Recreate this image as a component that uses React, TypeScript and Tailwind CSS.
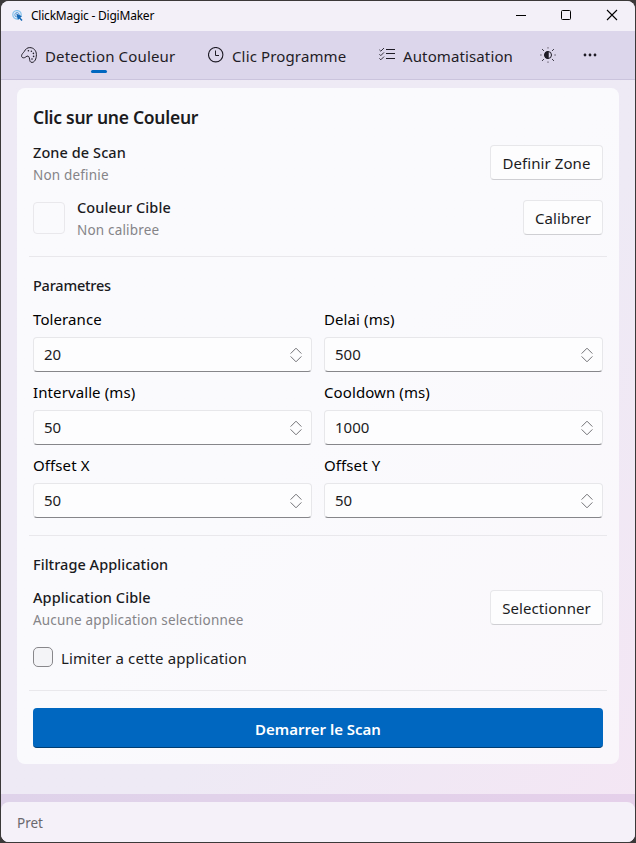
import { clsx } from "clsx"

function AppLogo() {
    return (
        <svg width="12" height="12" viewBox="0 0 12 12" fill="none">
            <circle cx="5" cy="4.8" r="4.2" stroke="#8cc4ec" strokeWidth="1.3" />
            <circle cx="5" cy="4.8" r="2.2" stroke="#4d9bdc" strokeWidth="1" />
            <path d="M4.2 3.6L10 6.2L8.2 7.4L10.6 10L9.4 11L7.2 8.6L6 10Z" fill="#1668b5" />
        </svg>
    )
}

function PaletteIcon() {
    return (
        <svg width="16" height="16" viewBox="0 0 16 16" fill="none" stroke="#1f1c26">
            <path d="M.6 8.6C.8 7 2 6.2 3.2 4.6C4.6 2 6.2 .6 8.8 .6C12.6 .6 15.4 3.6 15.4 7.6C15.4 12 13.6 15.4 11 15.4C9 15.4 8.8 13.8 8.6 12.2C8.4 10 7.4 8.6 6 9.2C4.6 9.8 4.2 10.8 2.6 10.8C1.2 10.8 .4 10 .6 8.6Z" />
            <g fill="#1f1c26" stroke="none">
                <circle cx="7.4" cy="3.8" r=".8" />
                <circle cx="10.4" cy="4.2" r=".8" />
                <circle cx="12.4" cy="6.4" r=".8" />
                <circle cx="12.6" cy="9.4" r=".8" />
                <circle cx="11" cy="12" r=".8" />
            </g>
        </svg>
    )
}

function ClockIcon() {
    return (
        <svg width="16" height="16" viewBox="0 0 16 16" fill="none" stroke="#1f1c26">
            <circle cx="7.7" cy="7.7" r="7.2" strokeWidth="1.1" />
            <path d="M7.5 3.5V8.5H11" />
        </svg>
    )
}

function ChecklistIcon() {
    return (
        <svg width="17" height="14" viewBox="0 0 17 14" fill="none" stroke="#1f1c26">
            <path d="M.4 2.8L1.8 4.2L5 1M.4 7.2L1.8 8.6L5 5.4M.4 11.4L1.8 12.8L5 9.6" strokeWidth=".9" />
            <path d="M7 2.5H16M7 6.5H16M7 11.5H16" />
        </svg>
    )
}

function BrightnessIcon() {
    return (
        <svg width="16" height="16" viewBox="0 0 16 16" fill="none" stroke="#1f1c26">
            <circle cx="8" cy="8" r="3.5" />
            <path d="M8.2 4.5A3.5 3.5 0 0 0 8.2 11.5Z" fill="#1f1c26" />
            <path d="M3.8 3.8L2.2 2.2M12.2 3.8L13.8 2.2M3.8 12.2L2.2 13.8M12.2 12.2L13.8 13.8" />
            <path d="M8 .2V1.6M8 14.4V15.8M.2 8H1.6M14.4 8H15.8" strokeWidth="1.5" opacity=".5" />
        </svg>
    )
}

function TitleBar() {
    return (
        <header className="flex h-[30px] shrink-0 items-center bg-[#f3f0f8] pl-[11px] text-black">
            <AppLogo />
            <span className="ml-[7px] flex-1 text-[12px] tracking-[-0.22px]">ClickMagic - DigiMaker</span>
            <svg width="104" height="12" viewBox="0 0 104 12" fill="none" stroke="#000" className="mr-4 mb-[2px]">
                <path d="M1 6.5H11" />
                <rect x="46.5" y="1.5" width="9" height="9" rx="1" />
                <path d="M92 1L102 11M102 1L92 11" strokeWidth="1.1" />
            </svg>
        </header>
    )
}

function NavBar() {
    return (
        <nav className="flex h-[49px] shrink-0 items-center border-b border-[#cbc4dd] bg-[#dcd6eb] pl-5 text-[#1f1c26]">
            <div className="relative flex w-[187px] items-center">
                <span className="mb-px">
                    <PaletteIcon />
                </span>
                <span className="mt-0.5 ml-2 tracking-[0.16px]">Detection Couleur</span>
                <span className="absolute -bottom-[6px] left-[70px] h-[3px] w-4 rounded-full bg-[#0067c0]" />
            </div>
            <div className="flex w-[171px] items-center">
                <span className="mb-px">
                    <ClockIcon />
                </span>
                <span className="mt-0.5 ml-2 tracking-[0.14px]">Clic Programme</span>
            </div>
            <div className="flex w-[161px] items-center">
                <span className="mb-[2px]">
                    <ChecklistIcon />
                </span>
                <span className="mt-0.5 ml-[7px] tracking-[0.12px]">Automatisation</span>
            </div>
            <span className="mb-px">
                <BrightnessIcon />
            </span>
            <svg width="14" height="4" viewBox="0 0 14 4" fill="#1f1c26" className="mb-px ml-[27px]">
                <circle cx="2" cy="2" r="1.4" />
                <circle cx="7" cy="2" r="1.4" />
                <circle cx="12" cy="2" r="1.4" />
            </svg>
        </nav>
    )
}

function ActionButton({ label, className }: { label: string; className: string }) {
    return (
        <button
            className={clsx(
                "mb-[3px] h-[35px] rounded border border-[#e7e7ea] border-b-[#cfcfd3] bg-[#fdfdfe] pt-px text-center tracking-[0.07px]",
                className
            )}
        >
            {label}
        </button>
    )
}

function Info({ title, status }: { title: string; status: string }) {
    return (
        <div className="flex-1">
            <div className="h-[22px] text-[14.5px] leading-[20px] font-medium tracking-[0.08px]">{title}</div>
            <div className="text-[13.5px] leading-[22px] tracking-[0.18px] text-[#858488]">{status}</div>
        </div>
    )
}

function Divider({ className }: { className: string }) {
    return <hr className={clsx("-mx-1 border-[#e9e8ec]", className)} />
}

function NumberField({ label, value }: { label: string; value: number }) {
    return (
        <div>
            <div className="h-[22px] leading-[20px] tracking-[0.1px] text-black">{label}</div>
            <div className="mt-1.5 flex h-[35px] items-center justify-between rounded border border-[#e7e7ea] border-b-[#86868a] bg-[#fdfdfe] pr-[9px] pl-2.5">
                <span>{value}</span>
                <svg width="12" height="16" viewBox="0 0 12 16" fill="none" stroke="#727276">
                    <path d="M.6 6.6L6 1.2L11.4 6.6M.6 9.4L6 14.8L11.4 9.4" />
                </svg>
            </div>
        </div>
    )
}

const fields = [
    { label: "Tolerance", value: 20 },
    { label: "Delai (ms)", value: 500 },
    { label: "Intervalle (ms)", value: 50 },
    { label: "Cooldown (ms)", value: 1000 },
    { label: "Offset X", value: 50 },
    { label: "Offset Y", value: 50 },
]

export default function App() {
    return (
        <div className="h-[843px] w-[636px] bg-[#3b3939] p-px font-['Noto_Sans','Open_Sans',sans-serif] text-[15px] text-[#1b1b1d]">
            <div className="flex h-full flex-col overflow-hidden rounded-lg bg-linear-to-br from-[#eeeaf5] from-60% to-[#f4e6f4]">
                <TitleBar />
                <NavBar />

                <main className="h-[714px] shrink-0 px-4 pt-2">
                    <section className="h-[676px] rounded-lg bg-linear-to-br from-[#fafafd] from-50% to-[#faf7fb] px-4 pt-[18px]">
                        <h1 className="h-6 text-[17.5px] leading-[23px] font-semibold tracking-[-0.27px]">Clic sur une Couleur</h1>

                        <div className="mt-3 flex h-11 items-center">
                            <Info title="Zone de Scan" status="Non definie" />
                            <ActionButton label="Definir Zone" className="w-[113px]" />
                        </div>
                        <div className="mt-[11px] flex h-11 items-center">
                            <div className="mr-3 mb-[2px] size-8 rounded border border-[#e9e8ec]" />
                            <Info title="Couleur Cible" status="Non calibree" />
                            <ActionButton label="Calibrer" className="w-20" />
                        </div>

                        <Divider className="mt-[15px]" />

                        <h2 className="mt-[18px] h-[22px] text-[14.5px] leading-[20px] font-medium tracking-[-0.22px]">Parametres</h2>
                        <div className="mt-3 grid grid-cols-2 gap-x-3 gap-y-2.5">
                            {fields.map((f) => (
                                <NumberField key={f.label} label={f.label} value={f.value} />
                            ))}
                        </div>

                        <Divider className="mt-[17px]" />

                        <h2 className="mt-[18px] h-[22px] text-[14.5px] leading-[20px] font-medium tracking-[0.04px]">Filtrage Application</h2>
                        <div className="mt-[11px] flex h-11 items-center">
                            <Info title="Application Cible" status="Aucune application selectionnee" />
                            <ActionButton label="Selectionner" className="w-[113px]" />
                        </div>
                        <label className="mt-4 flex h-5 items-center">
                            <span className="size-5 rounded-[5px] border border-[#88878b] bg-[#f4f4f7]" />
                            <span className="mt-[3px] ml-2 tracking-[0.12px]">Limiter a cette application</span>
                        </label>

                        <Divider className="mt-[23px]" />

                        <button className="mt-[17px] h-10 w-full rounded border-b border-[#003e73] bg-[#0067c0] pt-1 text-[15px] font-semibold text-white">
                            Demarrer le Scan
                        </button>
                    </section>
                </main>

                <footer className="flex-1 bg-linear-to-r from-[#dfd3ea] to-[#e5d0ea] pt-2">
                    <div className="flex h-full items-center rounded-t-lg bg-[#f5f1f9] px-4 pt-[3px] text-[13.5px] text-[#6a686e]">
                        Pret
                    </div>
                </footer>
            </div>
        </div>
    )
}
